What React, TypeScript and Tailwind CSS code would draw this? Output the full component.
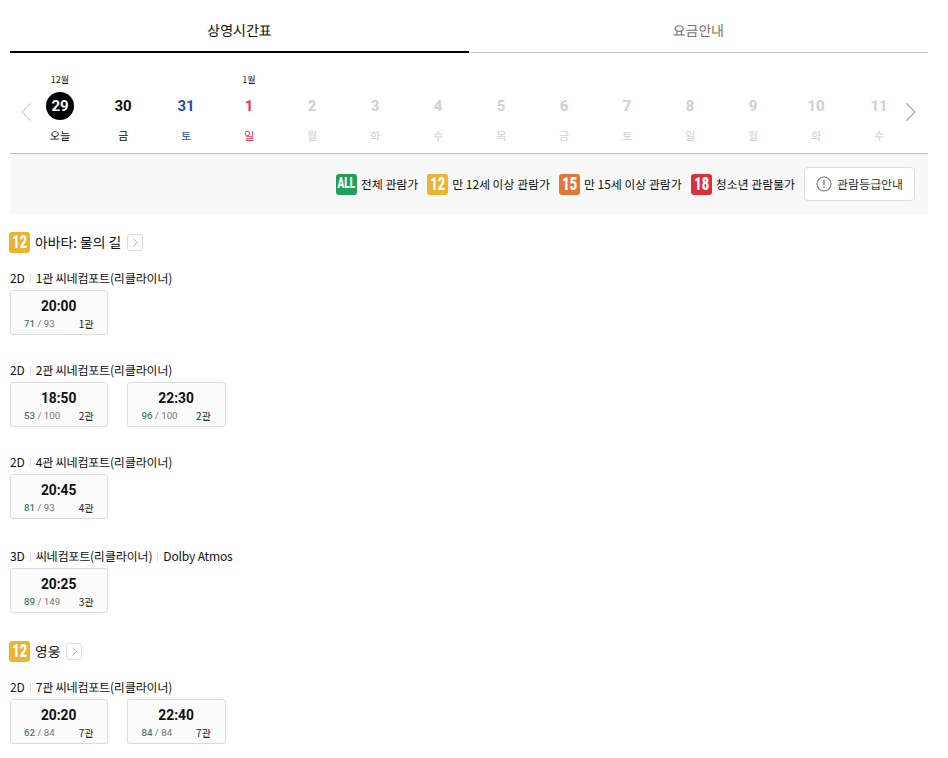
const KR = "font-['Noto_Sans_KR','Noto_Sans_CJK_KR','Noto_Sans',sans-serif]";

const days = [
  { month: "12월", date: "29", day: "오늘", today: true, tone: "text-black" },
  { date: "30", day: "금", tone: "text-[#111]" },
  { date: "31", day: "토", tone: "text-[#2f4aa8]" },
  { month: "1월", date: "1", day: "일", tone: "text-[#f0325a]" },
  { date: "2", day: "월", tone: "text-[#d0d0d0]" },
  { date: "3", day: "화", tone: "text-[#d0d0d0]" },
  { date: "4", day: "수", tone: "text-[#d0d0d0]" },
  { date: "5", day: "목", tone: "text-[#d0d0d0]" },
  { date: "6", day: "금", tone: "text-[#d0d0d0]" },
  { date: "7", day: "토", tone: "text-[#d0d0d0]" },
  { date: "8", day: "일", tone: "text-[#d0d0d0]" },
  { date: "9", day: "월", tone: "text-[#d0d0d0]" },
  { date: "10", day: "화", tone: "text-[#d0d0d0]" },
  { date: "11", day: "수", tone: "text-[#d0d0d0]" },
];

const movies = [
  {
    title: "아바타: 물의 길",
    groups: [
      { format: "2D", hall: "1관 씨네컴포트(리클라이너)", shows: [{ time: "20:00", left: 71, total: 93, room: "1관" }] },
      {
        format: "2D",
        hall: "2관 씨네컴포트(리클라이너)",
        shows: [
          { time: "18:50", left: 53, total: 100, room: "2관" },
          { time: "22:30", left: 96, total: 100, room: "2관" },
        ],
      },
      { format: "2D", hall: "4관 씨네컴포트(리클라이너)", shows: [{ time: "20:45", left: 81, total: 93, room: "4관" }] },
      {
        format: "3D",
        hall: "씨네컴포트(리클라이너)",
        extra: "Dolby Atmos",
        shows: [{ time: "20:25", left: 89, total: 149, room: "3관" }],
      },
    ],
  },
  {
    title: "영웅",
    groups: [
      {
        format: "2D",
        hall: "7관 씨네컴포트(리클라이너)",
        shows: [
          { time: "20:20", left: 62, total: 84, room: "7관" },
          { time: "22:40", left: 84, total: 84, room: "7관" },
        ],
      },
    ],
  },
];

function Rating({ label, color }: { label: string; color: string }) {
  return (
    <span
      className={`flex h-[21px] w-[21px] shrink-0 items-center justify-center rounded-[3px] font-['Roboto',sans-serif] font-black leading-none text-white ${color} ${
        label === "ALL" ? "text-[10px]" : "text-[15px]"
      }`}
    >
      <span className={label === "ALL" ? "scale-y-[1.4]" : "scale-x-[0.85] scale-y-[1.25]"}>{label}</span>
    </span>
  );
}

function Chevron({ dir }: { dir: "left" | "right" }) {
  return (
    <svg width="10" height="18" viewBox="0 0 10 18" fill="none" className="shrink-0">
      <path
        d={dir === "left" ? "M9.5 0.5 L1 9 L9.5 17.5" : "M0.5 0.5 L9 9 L0.5 17.5"}
        stroke={dir === "left" ? "#d4d4d4" : "#a8a8a8"}
        strokeWidth="1.3"
      />
    </svg>
  );
}

function MovieTitle({ title }: { title: string }) {
  return (
    <div className="flex h-[21px] items-center">
      <div className="-ml-[1px]">
        <Rating label="12" color="bg-[#ecb42f]" />
      </div>
      <span className="ml-[5px] text-[13.8px] text-[#111]">{title}</span>
      <span className="ml-[6px] flex h-[17px] w-[16px] items-center justify-center rounded-[3px] border border-[#ddd] bg-white">
        <svg width="5" height="9" viewBox="0 0 5 9" fill="none">
          <path d="M0.7 0.7 L4.2 4.5 L0.7 8.3" stroke="#aaa" strokeWidth="0.9" />
        </svg>
      </span>
    </div>
  );
}

function Sep() {
  return <span className="mx-[5px] inline-block h-[9px] w-px bg-[#ddd]" />;
}

export default function App() {
  return (
    <div className={`w-[948px] bg-white pl-[10px] pr-[20px] ${KR}`}>
      <div className="flex h-[53px] text-[14px]">
        <div className="flex w-1/2 items-center justify-center border-b-2 border-black pt-[9px] text-[#111]">
          상영시간표
        </div>
        <div className="flex w-1/2 items-center justify-center border-b border-[#ccc] pt-[8px] text-[#777]">
          요금안내
        </div>
      </div>

      <div className="flex h-[101px] items-start border-b border-[#bbb] pl-[11px] pt-[17px]">
        <div className="mt-[33px]">
          <Chevron dir="left" />
        </div>
        <div className="-ml-[2.5px] grid w-[882px] shrink-0 grid-cols-[repeat(14,63px)]">
          {days.map((d) => (
            <div key={d.date} className="flex flex-col items-center">
              <div className="h-[20px] text-[9px] leading-[20px] text-[#222]">{d.month}</div>
              <div
                className={`mt-[2px] flex h-[28px] w-[28px] items-center justify-center rounded-full font-['Roboto',sans-serif] text-[15px] font-bold ${
                  d.today ? "bg-black text-white" : d.tone
                }`}
              >
                {d.date}
              </div>
              <div className={`mt-[7px] text-[11px] leading-[16px] ${d.today ? "text-[#111]" : d.tone}`}>{d.day}</div>
            </div>
          ))}
        </div>
        <div className="-ml-[4.5px] mt-[33px]">
          <Chevron dir="right" />
        </div>
      </div>

      <div className="flex h-[60px] items-center justify-end bg-[#f8f8f8] pr-[13px] text-[11.9px] text-[#111]">
        <div className="flex items-center gap-[9px]">
          <div className="flex items-center gap-[4px]">
            <Rating label="ALL" color="bg-[#21a05a]" />
            전체 관람가
          </div>
          <div className="flex items-center gap-[4px]">
            <Rating label="12" color="bg-[#ecb42f]" />만 12세 이상 관람가
          </div>
          <div className="flex items-center gap-[4px]">
            <Rating label="15" color="bg-[#e0783a]" />만 15세 이상 관람가
          </div>
          <div className="flex items-center gap-[4px]">
            <Rating label="18" color="bg-[#dc2f3c]" />
            청소년 관람불가
          </div>
          <button className="flex h-[34px] w-[111px] items-center justify-center gap-[5px] rounded-[4px] border border-[#ddd] bg-white text-[12px] text-[#333]">
            <svg width="16" height="16" viewBox="0 0 16 16" fill="none">
              <circle cx="8" cy="8" r="7" stroke="#777" strokeWidth="1.1" />
              <path d="M8 4 V9" stroke="#777" strokeWidth="1.3" />
              <path d="M8 10.4 V12" stroke="#777" strokeWidth="1.3" />
            </svg>
            관람등급안내
          </button>
        </div>
      </div>

      <div className="pt-[18px]">
        {movies.map((movie) => (
          <div key={movie.title} className="mb-[28px]">
            <MovieTitle title={movie.title} />
            <div className="mt-[15px] flex flex-col gap-[25px]">
              {movie.groups.map((g) => (
                <div key={g.hall}>
                  <div
                    className={`flex items-center text-[12px] tracking-[-0.15px] text-[#111] ${
                      g.extra ? "h-[22px] pt-[2px]" : "h-[20px]"
                    }`}
                  >
                    {g.format}
                    <Sep />
                    {g.hall}
                    {g.extra && (
                      <>
                        <Sep />
                        <span>{g.extra}</span>
                      </>
                    )}
                  </div>
                  <div className="mt-[2px] flex gap-[19px]">
                    {g.shows.map((s) => (
                      <div
                        key={s.time}
                        className="flex h-[45px] w-[98.4px] flex-col rounded-[3px] border border-[#ddd] bg-[#fbfbfb] pl-[13px] pr-[14px] pt-[5px]"
                      >
                        <div className="text-center font-['Roboto',sans-serif] text-[13.8px] font-bold leading-[20px] text-[#111]">
                          {s.time}
                        </div>
                        <div className="mt-[1px] flex items-center justify-between leading-[14px]">
                          <span className="font-['Roboto',sans-serif] text-[9.7px] text-[#777]">
                            <span className="font-medium text-[#4f7a63]">{s.left}</span> / {s.total}
                          </span>
                          <span className="text-[10px] text-[#222]">{s.room}</span>
                        </div>
                      </div>
                    ))}
                  </div>
                </div>
              ))}
            </div>
          </div>
        ))}
      </div>
    </div>
  );
}
